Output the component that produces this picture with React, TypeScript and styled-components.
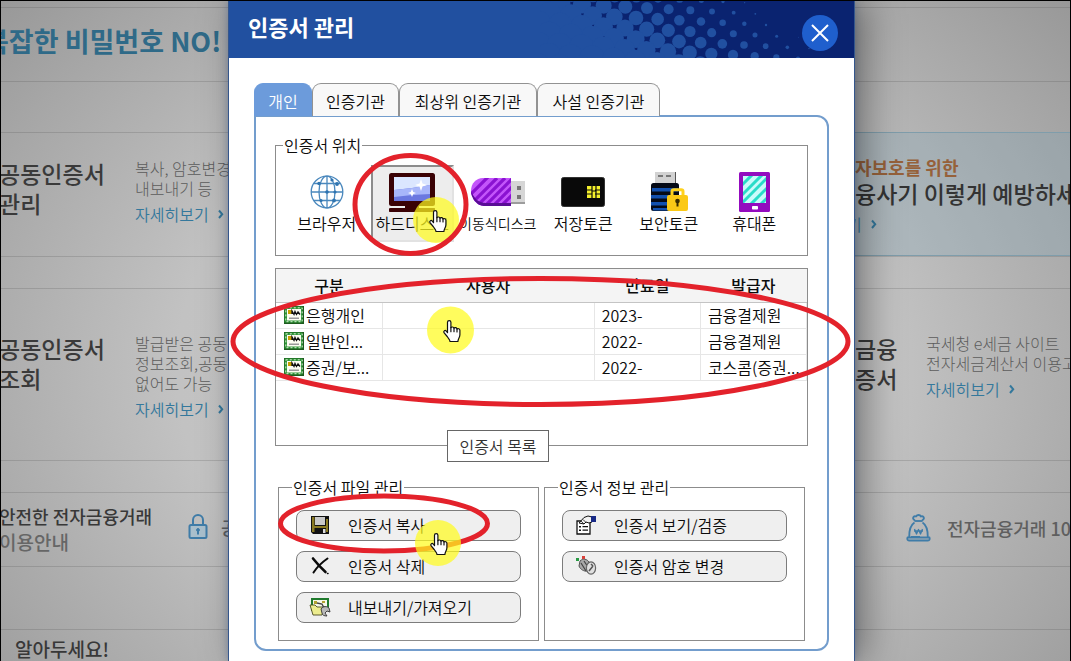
import React from "react";
import styled, { createGlobalStyle, css } from "styled-components";

const GlobalStyle = createGlobalStyle`
  *, *::before, *::after { box-sizing: border-box; }
  body {
    margin: 0;
    font-family: "Noto Sans CJK KR", "Noto Sans", sans-serif;
    font-size: 16px;
    line-height: 20px;
    color: #0c0c0c;
    word-break: keep-all;
  }
  button { font: inherit; color: inherit; cursor: pointer; }
  svg { display: block; flex: none; }
`;

const columns = "227fr 627px 215fr";

const Page = styled.div`
  display: grid;
  grid-template-columns: ${columns};
  min-height: 100vh;
  overflow: hidden;
  border: 1px solid #000;
`;

/* ---------- site behind the dialog ---------- */

const Site = styled.main`
  grid-column: 1 / -1;
  grid-row: 1;
  min-width: 0;
  padding-top: 6px;
  background: radial-gradient(ellipse 70% 90% at 50% 56%, #c8c8c8 0%, #c2c2c2 48%, #a6a6a6 80%, #8a8a8a 110%);
`;

const Row = styled.section<{ $height: number; $top?: number }>`
  display: grid;
  grid-template-columns: ${columns};
  min-height: ${(p) => p.$height}px;
  padding-top: ${(p) => p.$top ?? 0}px;
  border-top: 1px solid rgba(70, 70, 70, 0.2);
  white-space: nowrap;
`;

const Side = styled.div<{ $right?: boolean; $tint?: boolean }>`
  grid-column: ${(p) => (p.$right ? 3 : 1)};
  display: flex;
  align-items: flex-start;
  min-width: 0;
  margin-left: ${(p) => (p.$right ? 0 : -2)}px;
  overflow: hidden;
  ${(p) =>
    p.$tint &&
    css`
      margin-top: -26px;
      padding-top: 23px;
      border: solid #7f9dab;
      border-width: 1px 0;
      background: rgba(120, 165, 185, 0.24);
    `}
`;

const Headline = styled.h2`
  flex: none;
  margin: 0 0 0 -15px;
  font-size: 27px;
  line-height: 32px;
  font-weight: 700;
  color: #2f6a88;
`;

const TopicTitle = styled.h3<{ $width: number }>`
  flex: none;
  width: ${(p) => p.$width}px;
  margin: 0;
  font-size: 23px;
  line-height: 30px;
  font-weight: 500;
  color: #3a3a3a;
`;

const Topic = styled.div`
  flex: none;
`;

const TopicText = styled.p`
  margin: 0;
  font-weight: 300;
  color: #5c5c5c;
`;

const MoreLink = styled.a`
  display: flex;
  gap: 9px;
  margin-top: 6px;
  align-items: center;
  font-weight: 350;
  color: #34789c;
  text-decoration: none;
`;

const Alert = styled.div`
  flex: none;
`;

const AlertLabel = styled.p`
  margin: 0;
  font-size: 18px;
  line-height: 22px;
  font-weight: 700;
  color: #96613a;
`;

const AlertTitle = styled.h3`
  margin: 0;
  font-size: 23px;
  line-height: 30px;
  font-weight: 500;
  color: #333;
`;

const AlertLink = styled(MoreLink)`
  margin: 6px 0 0 -8px;
`;

const GuideTitle = styled.h3<{ $width: number }>`
  flex: none;
  width: ${(p) => p.$width}px;
  margin: 0;
  font-size: 18px;
  line-height: 25px;
  font-weight: 500;
  color: #383838;

  span {
    display: block;
    font-size: 19px;
    color: #666;
  }
`;

const GuideItem = styled.div<{ $indent?: number; $gap: number }>`
  display: flex;
  flex: none;
  align-items: center;
  gap: ${(p) => p.$gap}px;
  margin-left: ${(p) => p.$indent ?? 0}px;
  padding-top: 10px;
  font-size: 18px;
  line-height: 26px;
  font-weight: 500;
  color: #5f5f5f;
`;

const NoticeTitle = styled.h3`
  flex: none;
  margin: 0;
  padding-left: 16px;
  font-size: 19px;
  line-height: 24px;
  font-weight: 500;
  color: #383838;
`;

const Chevron = () => (
  <svg width="6" height="10" viewBox="0 0 6 10" fill="none" stroke="#34789c" strokeWidth="2">
    <path d="M1 1.5 4.2 5.2 1 9" />
  </svg>
);

const LockIcon = () => (
  <svg width="20" height="26" viewBox="0 0 20 26" fill="none" stroke="#3f7ca8" strokeWidth="2">
    <path d="M5 11V6a5 5 0 0 1 10 0v5" />
    <rect x="1.5" y="11" width="17" height="13" rx="1.5" fill="#a9bfcc" />
    <circle cx="10" cy="16" r="1.4" fill="#3f7ca8" strokeWidth="1" />
    <path d="M10 16v4.5" />
  </svg>
);

const MoneyBagIcon = () => (
  <svg width="25" height="28" viewBox="0 0 25 28" fill="none" stroke="#3f7ca8" strokeWidth="1.8" strokeLinejoin="round">
    <path d="M9 6.500C5.500 4.500 7.500 1.500 10 2.500c1.200-2 4-2 5 0 2.500-1 4.500 2 1 4" />
    <path d="M8.500 7h8" />
    <path d="M8.500 8.500C4.500 11 3 15 3.200 23.500M16.500 8.500c4 2.500 5.500 6.500 5.300 15" />
    <path d="M1.500 23.500h22c.6 1.800 0 3-1.500 3H3c-1.500 0-2.100-1.200-1.500-3ZM5 23h9" />
    <path d="M8.500 15l2 5 2-4.500 2 4.500 2-5M8 17h9" strokeWidth="1.300" />
  </svg>
);

const SiteContent = () => (
  <Site>
    <Row $height={74} $top={17}>
      <Side>
        <Headline>복잡한 비밀번호 NO!</Headline>
      </Side>
    </Row>
    <Row $height={51} />
    <Row $height={124} $top={25}>
      <Side>
        <TopicTitle $width={136}>
          공동인증서
          <br />
          관리
        </TopicTitle>
        <Topic>
          <TopicText>
            복사, 암호변경
            <br />
            내보내기 등
          </TopicText>
          <MoreLink href="#manage">
            자세히보기 <Chevron />
          </MoreLink>
        </Topic>
      </Side>
      <Side $right $tint>
        <Alert>
          <AlertLabel>자보호를 위한</AlertLabel>
          <AlertTitle>융사기 이렇게 예방하세</AlertTitle>
          <AlertLink href="#alert">
            기 <Chevron />
          </AlertLink>
        </Alert>
      </Side>
    </Row>
    <Row $height={32} />
    <Row $height={172} $top={44}>
      <Side>
        <TopicTitle $width={136}>
          공동인증서
          <br />
          조회
        </TopicTitle>
        <Topic>
          <TopicText>
            발급받은 공동
            <br />
            정보조회,공동
            <br />
            없어도 가능
          </TopicText>
          <MoreLink href="#lookup">
            자세히보기 <Chevron />
          </MoreLink>
        </Topic>
      </Side>
      <Side $right>
        <TopicTitle $width={71}>
          금융
          <br />
          증서
        </TopicTitle>
        <Topic>
          <TopicText>
            국세청 e세금 사이트
            <br />
            전자세금계산서 이용고
          </TopicText>
          <MoreLink href="#tax">
            자세히보기 <Chevron />
          </MoreLink>
        </Topic>
      </Side>
    </Row>
    <Row $height={32} />
    <Row $height={74} $top={11}>
      <Side>
        <GuideTitle $width={189}>
          안전한 전자금융거래
          <span>이용안내</span>
        </GuideTitle>
        <GuideItem $gap={13}>
          <LockIcon />
          공
        </GuideItem>
      </Side>
      <Side $right>
        <GuideItem $gap={16} $indent={51}>
          <MoneyBagIcon />
          전자금융거래 10계
        </GuideItem>
      </Side>
    </Row>
    <Row $height={63} />
    <Row $height={31} $top={7}>
      <Side>
        <NoticeTitle>알아두세요!</NoticeTitle>
      </Side>
    </Row>
  </Site>
);

/* ---------- dialog ---------- */

const Dialog = styled.section`
  position: relative;
  grid-column: 2;
  grid-row: 1;
  border: solid #34568c;
  border-width: 0 1px;
  background: #fff;
  box-shadow: 10px 0 36px rgba(0, 0, 0, 0.4), 0 0 8px rgba(60, 90, 150, 0.4);
  font-weight: 350;
`;

const DialogHeader = styled.header`
  position: relative;
  display: flex;
  align-items: flex-start;
  justify-content: space-between;
  height: 57px;
  padding: 9px 16px 0 19px;
  overflow: hidden;
  background: #2150a0;
`;

const Halftone = styled.svg`
  position: absolute;
  top: 0;
  right: 0;
`;

const DialogTitle = styled.h1`
  margin: 0;
  font-size: 22px;
  line-height: 32px;
  font-weight: 700;
  color: #fff;
`;

const CloseButton = styled.button`
  position: relative;
  display: grid;
  place-items: center;
  width: 36px;
  height: 36px;
  margin-top: 5px;
  padding: 0;
  border: 0;
  border-radius: 50%;
  background: #1f5fcd;
`;

const DialogBody = styled.div`
  padding: 25px 25px 8px;
`;

const Tabs = styled.div`
  display: flex;
`;

const Tab = styled.button<{ $width: number; $active?: boolean }>`
  width: ${(p) => p.$width}px;
  height: 33px;
  padding: 2px 0 0;
  border: 1px solid #929292;
  border-bottom: 0;
  border-radius: 9px 9px 0 0;
  background: #f8f8f8;
  white-space: nowrap;
  ${(p) =>
    p.$active &&
    css`
      border-color: #6c9bdb;
      background: #6c9bdb;
      color: #fff;
    `}
`;

const Panel = styled.div`
  margin-top: -1px;
  padding: 18px 19px 8px;
  border: 2px solid #739dcd;
  border-radius: 0 12px 12px 12px;
`;

const Group = styled.fieldset<{ $pad: string; $legend: number }>`
  flex: 1;
  min-width: 0;
  margin: 0;
  padding: ${(p) => p.$pad};
  border: 1px solid #8c8c8c;

  legend {
    margin-left: ${(p) => p.$legend}px;
    padding: 0 1px;
    height: 20px;
  }
`;

const Locations = styled.div`
  display: grid;
  grid-template-columns: repeat(6, 1fr);
  gap: 2px;
`;

const Location = styled.button<{ $active?: boolean; $small?: boolean }>`
  display: flex;
  flex-direction: column;
  align-items: center;
  height: 77px;
  padding: 4px 0 0;
  border: 2px solid transparent;
  background: transparent;
  font-size: ${(p) => (p.$small ? 14 : 16)}px;
  white-space: nowrap;
  ${(p) =>
    p.$active &&
    css`
      border-color: #8c8c8c #e2e2e2 #e2e2e2 #8c8c8c;
      background: #ededed;
    `}
`;

const LocationIcon = styled.span`
  display: grid;
  place-items: center;
  height: 42px;
`;

const ListBox = styled.div`
  position: relative;
  min-height: 178px;
  margin-top: 12px;
  border: 1px solid #8c8c8c;
`;

const CertTable = styled.table`
  width: 100%;
  table-layout: fixed;
  border-collapse: collapse;
  white-space: nowrap;

  th {
    height: 33px;
    padding: 0;
    border-bottom: 1px solid #c4c4c4;
    background: #f4f4f4;
    font-weight: 500;
  }

  td {
    height: 26px;
    padding: 0 0 0 7px;
    border: solid #e6e6e6;
    border-width: 0 1px 1px 0;
    overflow: hidden;
  }
`;

const CertName = styled.span`
  display: flex;
  align-items: center;
  gap: 2px;
  padding-left: 1px;
`;

const ListTip = styled.div`
  position: absolute;
  left: 171px;
  bottom: -17px;
  width: 102px;
  padding: 5px 0;
  border: 1px solid #666;
  background: #fff;
  color: #333;
  text-align: center;
`;

const Actions = styled.div`
  display: flex;
  gap: 5px;
  margin: 31px 3px 0;
`;

const ActionList = styled.div`
  display: grid;
  gap: 10px;
`;

const Action = styled.button`
  display: flex;
  align-items: center;
  gap: 17px;
  height: 31px;
  padding: 0 0 1px 12px;
  border: 1px solid #7c7c7c;
  border-radius: 8px;
  background: #efefef;
  white-space: nowrap;
`;

/* ---------- drawings in the dialog ---------- */

const halftoneDots = (() => {
  const dots: { x: number; y: number; r: number }[] = [];
  for (let j = -4; j <= 6; j++) {
    for (let i = -9; i <= 11; i++) {
      const x = 321 + i * 65 + j * 32;
      const y = 24 + i * 3.5 + j * 33.5;
      const r = 18 - (x - 321) * 0.051 + (y - 24) * 0.075;
      if (r > 1 && x > -60 && x < 960 && y > -30 && y < 205) dots.push({ x, y, r: Math.min(r, 38) });
    }
  }
  return dots;
})();

const HeaderDots = () => (
  <Halftone width="314" height="57" viewBox="0 3 942 171" aria-hidden="true">
    <path d="M80 3H942V174H330L230 150Z" fill="#0a2370" />
    <g fill="#2150a0">
      {halftoneDots.map((d) => (
        <circle key={`${d.x}-${d.y}`} cx={d.x} cy={d.y} r={d.r} />
      ))}
    </g>
  </Halftone>
);

const GlobeIcon = () => (
  <svg width="34" height="34" viewBox="0 0 34 34" fill="none" stroke="#4a88bd" strokeWidth="1.300">
    <circle cx="17" cy="17" r="15.800" />
    <ellipse cx="17" cy="17" rx="8" ry="15.800" />
    <path d="M1 17h32M4 8.500h26M4 25.500h26M17 1v32" />
    <g fill="#2f74b0" stroke="none">
      <circle cx="17" cy="17" r="1.800" />
      <circle cx="27" cy="9" r="1.900" />
      <circle cx="22" cy="5" r="1.600" />
      <circle cx="9" cy="8.500" r="1.700" />
      <circle cx="25" cy="17" r="1.600" />
      <circle cx="24" cy="25.500" r="1.900" />
      <circle cx="11" cy="25.500" r="1.600" />
    </g>
  </svg>
);

const MonitorIcon = () => (
  <svg width="46" height="39" viewBox="0 0 46 39">
    <rect width="46" height="33" rx="2.500" fill="#3a0205" />
    <rect x="5" y="4" width="36" height="24" fill="#6b78e0" />
    <path d="M5 4h36v8l-18 3-18 2Z" fill="#dbe6ff" />
    <path d="M5 17l18-2 18-3v9l-18 1-18 2Z" fill="#a8b6fa" />
    <path d="M32 6l1.500 4.500L38 12l-4.500 1.500L32 18l-1.500-4.500L26 12l4.500-1.500Z" fill="#fff" />
    <path d="M23 16l1.200 3 2.800 1-2.800 1L23 24l-1.200-3-2.800-1 2.800-1Z" fill="#fff" />
    <path d="M16 33h14v2h15a1.500 1.500 0 0 1 0 4H1.500a1.500 1.500 0 0 1 0-4H16Z" fill="#3a0205" />
    <path d="M1 33.500h15v1.300H1ZM30 33.500h15v1.300H30Z" fill="#ededed" />
  </svg>
);

const UsbIcon = () => (
  <svg width="54" height="28" viewBox="0 0 54 28">
    <defs>
      <clipPath id="usb-body">
        <path d="M40 0H12C5 0 0 5.500 0 13s6 15 13 15h27Z" />
      </clipPath>
    </defs>
    <g clipPath="url(#usb-body)">
      <rect width="40" height="28" fill="#c355fa" />
      <path d="M-12 28 18-2M-4 30 26 0M4 30 34 0M12 30 42 0M20 30 46 4M28 30 50 8" stroke="#8a12d2" strokeWidth="3.200" />
      <path d="M0 13c0 7.500 6 15 13 15h27v-3H15C7 25 3 20 0 13Z" fill="#5a0e96" />
    </g>
    <path d="M40 3h14v21H40Z" fill="#d6d6d6" />
    <path d="M40 24h14v2H40Z" fill="#9c9c9c" />
    <path d="M46 8h4v4h-4ZM46 17h4v4h-4Z" fill="#777" />
  </svg>
);

const CardIcon = () => (
  <svg width="44" height="30" viewBox="0 0 44 30">
    <rect x=".5" y=".5" width="43" height="29" rx="2" fill="#090909" stroke="#333" />
    <path d="M26 9h13v12H26Z" fill="#f4f02c" />
    <path d="M26 13h5M26 17h5M34 13h5M34 17h5M31 9v12M35 9v12M31 14h4" stroke="#090909" strokeWidth="1.200" />
  </svg>
);

const SecureTokenIcon = () => (
  <svg width="38" height="40" viewBox="0 0 38 40">
    <path d="M5 0h21v12H5Z" fill="#d2d2d2" />
    <path d="M25 0h1v12h-1Z" fill="#555" />
    <path d="M8 3h5v2H8ZM16 3h5v2h-5Z" fill="#777" />
    <rect x="1" y="11" width="28" height="28" rx="2.500" fill="#050a16" />
    <path d="M2 16h26v3.500H2ZM1 23h28v3.500H1ZM1 30h28v3.500H1ZM3 36h24v2.500H3Z" fill="#1250ae" />
    <path d="M22 24v-4.500c0-1 .8-1.800 1.800-1.800h7.400c1 0 1.800.8 1.800 1.800V24" fill="none" stroke="#ffd21e" strokeWidth="3" />
    <rect x="17" y="23" width="21" height="16" rx="2" fill="#fbc916" />
    <circle cx="27.500" cy="29" r="2.300" fill="#3a2d00" />
    <path d="M26.500 29h2v5.500h-2Z" fill="#3a2d00" />
  </svg>
);

const PhoneIcon = () => (
  <svg width="31" height="40" viewBox="0 0 31 40">
    <defs>
      <clipPath id="phone-screen">
        <path d="M4 4h23v27H4Z" />
      </clipPath>
    </defs>
    <rect width="31" height="40" rx="1.500" fill="#930bbf" />
    <g clipPath="url(#phone-screen)">
      <rect x="4" y="4" width="23" height="27" fill="#c9fbfb" />
      <path d="M-4 20 20-4M0 26 28-2M0 34 34 0M8 36 34 10M16 38 36 18" stroke="#29dcc8" strokeWidth="3" />
    </g>
    <rect x="13" y="34" width="6" height="3.500" rx=".8" fill="#fff" />
  </svg>
);

const CertIcon = () => (
  <svg width="20" height="18" viewBox="0 0 20 18">
    <rect width="20" height="18" fill="#1d5a1d" />
    <rect x=".5" y=".5" width="18" height="16" fill="#2f9638" />
    <rect x="3" y="3" width="14" height="11.500" fill="#fdfdf2" />
    <rect x="1.800" y="1.800" width="16.400" height="13.900" fill="none" stroke="#d5eccf" strokeWidth="1" strokeDasharray="2 2" />
    <rect x="4" y="4" width="4" height="4" fill="#c9a000" />
    <path d="M8 8V5l2 3.500L11 5.500l1.500 3L14 6l2 2.500" fill="none" stroke="#111" strokeWidth="1.300" />
    <path d="M5 11.500h10v1.500H5Z" fill="#999" />
  </svg>
);

const FloppyIcon = () => (
  <svg width="22" height="20" viewBox="0 0 22 20">
    <path d="M2 1h18v18H4l-2-2Z" fill="#111" />
    <path d="M3 2h2.500v15H3ZM17 4h2v13h-2ZM5 11h12v2H5Z" fill="#8a7a22" />
    <path d="M6 2h10v8H6Z" fill="#c9c9c9" />
    <path d="M14 14h2.500v4H14Z" fill="#ddd" />
  </svg>
);

const DeleteIcon = () => (
  <svg width="22" height="20" viewBox="0 0 22 20" fill="none" stroke="#0a0a0a" strokeLinecap="round">
    <path d="M4 2.500c4 5 8 9.500 12.500 13.500" strokeWidth="2.600" />
    <path d="M18.500 2.500C12 7 8 11 4.500 16.500" strokeWidth="2" />
    <path d="M18.500 17.500h.5" strokeWidth="1.500" />
  </svg>
);

const TransferIcon = () => (
  <svg width="22" height="20" viewBox="0 0 22 20">
    <path d="M2 1h18v13H2Z" fill="#1f7a2d" />
    <path d="M4 3h14v9H4Z" fill="#f6f8e8" />
    <path d="M5 4h3v3H5ZM13 4h3v2h-3Z" fill="#b3a230" />
    <path d="M1 8h5l2 2h8l-3 8H4Z" fill="#ecec8e" stroke="#4a4a20" strokeWidth=".9" />
    <path d="M8 6l5 1 2 4" fill="none" stroke="#444" strokeWidth="1.400" />
    <path d="M12 12c2-3 6-3 8-1l1 4-3-1-2 2 2 3c-3 0-5-1-5-3Z" fill="#b9b9b9" stroke="#333" strokeWidth=".9" />
  </svg>
);

const PropertiesIcon = () => (
  <svg width="22" height="20" viewBox="0 0 22 20">
    <path d="M2 6h13v13H2Z" fill="#fff" stroke="#111" strokeWidth="1.300" />
    <path d="M4 11h2v1.500H4ZM4 14.500h2V16H4ZM7.500 11H13v1.300H7.500ZM7.500 14.500H13v1.300H7.500Z" fill="#111" />
    <path d="M4 8 9 2.500l4-1.500 4 1v5l-3 1-3-1-2 2Z" fill="#f2f2f2" stroke="#111" strokeWidth="1" />
    <path d="M6 6l3 3M8 4.500l3 3" stroke="#111" strokeWidth=".8" />
    <path d="M16 1h5v6h-5Z" fill="#182a86" />
  </svg>
);

const KeyChangeIcon = () => (
  <svg width="22" height="22" viewBox="0 0 22 22">
    <path d="M5 6c3-3 7-2 9 1l-1 9c-4 1-8-2-9-5Z" fill="#a8a8a8" stroke="#555" strokeWidth="1" />
    <path d="M6 8l5 8M9 6l4 6" stroke="#444" strokeWidth="1.200" />
    <ellipse cx="16" cy="13" rx="4.600" ry="6.200" fill="#e0e0e0" stroke="#666" strokeWidth="1.200" />
    <path d="M14 16l4-5M16 9l2 2" fill="none" stroke="#555" strokeWidth="1.500" />
    <path d="M1 3h3v3H1Z" fill="#2a9a45" />
    <path d="M7 1h3v3H7Z" fill="#d8403a" />
  </svg>
);

const Marks = styled.svg`
  position: absolute;
  top: 0;
  left: -1px;
  pointer-events: none;
`;

const Hand = ({ x, y }: { x: number; y: number }) => (
  <g transform={`translate(${x} ${y})`} stroke="#111" strokeWidth="1.200" strokeLinejoin="round" strokeLinecap="round">
    <path
      d="M4.500 2.300a1.700 1.700 0 0 1 3.400 0v5.400c.6-1.100 2.700-.9 3.100.5.700-.9 2.600-.7 3 .8.800-.7 2.900-.3 2.900 1.300v4.400c0 3-2 4-2 6.800H7c0-2-1.700-3-2.800-5L1 12.700c-.9-1.800 1.200-3 2.300-1.500l1.200 1.500Z"
      fill="#fdfdfd"
    />
    <path d="M7.900 7.700v4M11 8.200v3.500M14 9v3" fill="none" />
  </g>
);

const Annotations = () => (
  <Marks width="627" height="659" viewBox="228 1 627 659" aria-hidden="true">
    <circle cx="436" cy="220" r="23" fill="#fffb1e" fillOpacity="0.72" />
    <g fill="none" stroke="#e3222b" strokeWidth="5">
      <ellipse cx="410.500" cy="204.500" rx="55.500" ry="49" />
      <ellipse cx="540.500" cy="341.500" rx="307.500" ry="63" />
      <ellipse cx="384" cy="523.500" rx="103.500" ry="27.500" />
    </g>
    <g fill="#fffb1e" fillOpacity="0.72">
      <circle cx="450.500" cy="330" r="23.500" />
      <circle cx="438" cy="543" r="23" />
    </g>
    <Hand x={429} y={210} />
    <Hand x={443} y={320} />
    <Hand x={430} y={533} />
  </Marks>
);

/* ---------- data ---------- */

const tabs = [
  { label: "개인", width: 58 },
  { label: "인증기관", width: 87 },
  { label: "최상위 인증기관", width: 138 },
  { label: "사설 인증기관", width: 123 },
];

const locations = [
  { label: "브라우저", icon: <GlobeIcon /> },
  { label: "하드디스크", icon: <MonitorIcon /> },
  { label: "이동식디스크", icon: <UsbIcon />, small: true },
  { label: "저장토큰", icon: <CardIcon /> },
  { label: "보안토큰", icon: <SecureTokenIcon /> },
  { label: "휴대폰", icon: <PhoneIcon /> },
];

const certificates = [
  { kind: "은행개인", expires: "2023-", issuer: "금융결제원" },
  { kind: "일반인...", expires: "2022-", issuer: "금융결제원" },
  { kind: "증권/보...", expires: "2022-", issuer: "코스콤(증권..." },
];

const fileActions = [
  { label: "인증서 복사", icon: <FloppyIcon /> },
  { label: "인증서 삭제", icon: <DeleteIcon /> },
  { label: "내보내기/가져오기", icon: <TransferIcon /> },
];

const infoActions = [
  { label: "인증서 보기/검증", icon: <PropertiesIcon /> },
  { label: "인증서 암호 변경", icon: <KeyChangeIcon /> },
];

const actionGroups = [
  { title: "인증서 파일 관리", actions: fileActions },
  { title: "인증서 정보 관리", actions: infoActions },
];

const CertificateDialog = () => (
  <Dialog role="dialog" aria-labelledby="dialog-title">
    <DialogHeader>
      <HeaderDots />
      <DialogTitle id="dialog-title">인증서 관리</DialogTitle>
      <CloseButton type="button" aria-label="닫기">
        <svg width="18" height="18" viewBox="0 0 18 18" stroke="#fff" strokeWidth="2">
          <path d="M1 1l16 16M17 1 1 17" />
        </svg>
      </CloseButton>
    </DialogHeader>
    <DialogBody>
      <Tabs role="tablist">
        {tabs.map((tab, index) => (
          <Tab key={tab.label} type="button" role="tab" aria-selected={index === 0} $width={tab.width} $active={index === 0}>
            {tab.label}
          </Tab>
        ))}
      </Tabs>
      <Panel role="tabpanel">
        <Group $pad="10px 11px 13px 9px" $legend={-2}>
          <legend>인증서 위치</legend>
          <Locations>
            {locations.map((item, index) => (
              <Location key={item.label} type="button" $active={index === 1} $small={item.small}>
                <LocationIcon>{item.icon}</LocationIcon>
                {item.label}
              </Location>
            ))}
          </Locations>
        </Group>
        <ListBox>
          <CertTable>
            <colgroup>
              <col style={{ width: "20%" }} />
              <col style={{ width: "40%" }} />
              <col style={{ width: "20%" }} />
              <col style={{ width: "20%" }} />
            </colgroup>
            <thead>
              <tr>
                <th>구분</th>
                <th>사용자</th>
                <th>만료일</th>
                <th>발급자</th>
              </tr>
            </thead>
            <tbody>
              {certificates.map((cert) => (
                <tr key={cert.kind}>
                  <td>
                    <CertName>
                      <CertIcon />
                      {cert.kind}
                    </CertName>
                  </td>
                  <td />
                  <td>{cert.expires}</td>
                  <td>{cert.issuer}</td>
                </tr>
              ))}
            </tbody>
          </CertTable>
          <ListTip>인증서 목록</ListTip>
        </ListBox>
        <Actions>
          {actionGroups.map((group) => (
            <Group key={group.title} $pad="13px 17px 17px" $legend={-4}>
              <legend>{group.title}</legend>
              <ActionList>
                {group.actions.map((action) => (
                  <Action key={action.label} type="button">
                    {action.icon}
                    {action.label}
                  </Action>
                ))}
              </ActionList>
            </Group>
          ))}
        </Actions>
      </Panel>
    </DialogBody>
    <Annotations />
  </Dialog>
);

export default function App() {
  return (
    <>
      <GlobalStyle />
      <Page>
        <SiteContent />
        <CertificateDialog />
      </Page>
    </>
  );
}
